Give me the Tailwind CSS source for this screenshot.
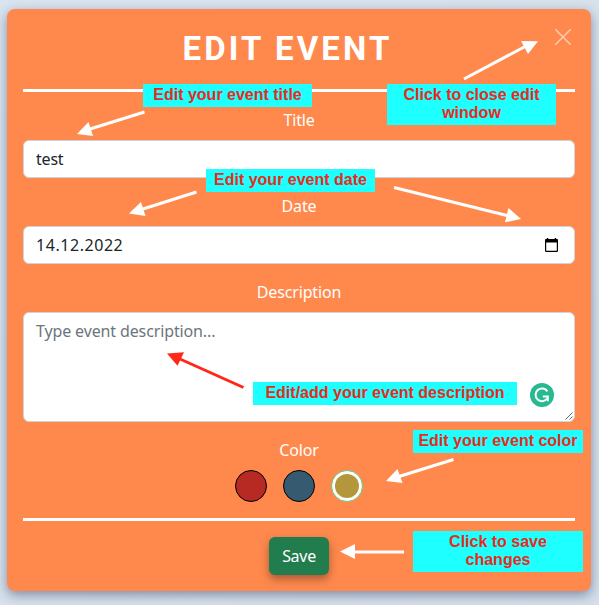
<!DOCTYPE html>
<html lang="en">
<head>
<meta charset="utf-8">
<title>Edit event</title>
<script src="https://cdn.jsdelivr.net/npm/@tailwindcss/browser@4"></script>
</head>
<body class="relative h-[605px] w-[599px] overflow-hidden bg-linear-to-br from-[#dae4ef] to-[#d3dfea] pt-[9px] pl-[7px] font-['Noto_Sans',sans-serif] text-base">
<main class="flex h-[582px] w-[584px] flex-col rounded-lg bg-[#ff894d] px-4 text-white shadow-[0_4px_12px_rgba(30,35,70,0.45)]">
  <header class="relative flex h-[83px] shrink-0 items-center justify-center border-b-3 border-white">
    <h1 class="pr-[23px] font-['Roboto',sans-serif] text-[33px] leading-10 font-bold tracking-[3.1px]">EDIT EVENT</h1>
    <button class="absolute top-5 right-1 h-4 w-4" aria-label="Close">
      <svg viewBox="0 0 16 16" class="h-4 w-4" fill="none" stroke="white" stroke-opacity=".55" stroke-width="1.6" stroke-linecap="round"><path d="M.8.8 15.2 15.2M15.2.8.8 15.2"/></svg>
    </button>
  </header>
  <label class="mt-4 mb-2 h-6 text-center leading-6 tracking-[-0.2px]">Title</label>
  <div class="flex h-[38px] shrink-0 items-center rounded-md border border-[#ced4da] bg-white px-3 tracking-[-0.2px] text-[#212529]">test</div>
  <label class="mt-4 mb-2 h-6 text-center leading-6 tracking-[-0.1px]">Date</label>
  <div class="flex h-[38px] shrink-0 items-center justify-between rounded-md border border-[#ced4da] bg-white px-3 text-[#212529]">
    <span class="tracking-[0.55px]">14.12.2022</span>
    <svg viewBox="0 0 13 14" class="mr-1 h-[14px] w-[13px]"><path fill="black" fill-rule="evenodd" d="M1.800 0h1.500v1h6.400V0h1.500v1H12a1 1 0 0 1 1 1v10.800a1.200 1.200 0 0 1-1.200 1.200H1.200A1.200 1.200 0 0 1 0 12.800V2a1 1 0 0 1 1-1h.8zM1.200 4.500v8.200h10.600V4.500z"/></svg>
  </div>
  <label class="mt-4 mb-2 h-6 text-center leading-6 tracking-[-0.15px]">Description</label>
  <div class="relative h-[110px] shrink-0 rounded-md border border-[#ced4da] bg-white px-3 py-1.5 leading-6 tracking-[-0.13px] text-[#6c757d]">Type event description...
    <svg viewBox="0 0 24 24" class="absolute top-[70px] right-5 h-6 w-6"><circle cx="12" cy="12" r="12" fill="#27b990"/><path d="M17.400 8.400A6.400 6.400 0 1 0 17.200 15.500" fill="none" stroke="white" stroke-width="2"/><path d="M12.800 13.500h5v4.800" fill="none" stroke="white" stroke-width="2"/></svg>
    <svg viewBox="0 0 8 8" class="absolute right-px bottom-px h-2 w-2" fill="none" stroke="#555" stroke-width=".9"><path d="M.5 7.500 7.500.5M4.500 7.500l3-3"/></svg>
  </div>
  <label class="mt-4 mb-2 h-6 text-center leading-6 tracking-[-0.1px]">Color</label>
  <div class="flex h-8 shrink-0 justify-center gap-4">
    <span class="h-8 w-8 rounded-full border border-black bg-[#b72a24]"></span>
    <span class="h-8 w-8 rounded-full border border-black bg-[#365b70]"></span>
    <span class="flex h-8 w-8 items-center justify-center rounded-full border border-[#67c777] bg-white"><i class="h-6 w-6 rounded-full bg-[#b5973b]"></i></span>
  </div>
  <footer class="mt-4 flex justify-center border-t-3 border-white pt-4">
    <button class="h-[38px] w-[60px] rounded-md bg-[#217c4e] tracking-[-0.3px] shadow-[0_4px_8px_rgba(60,30,20,0.45)]">Save</button>
  </footer>
</main>

<svg class="absolute inset-0" width="599" height="605" fill="white" stroke="white" stroke-width="3">
  <path d="M144.500 112 90 129"/><path stroke="none" d="M77 134l11.500-12 4.500 14z"/>
  <path d="M464 79 526 46"/><path stroke="none" d="M538 41.300l-17-.3 7 13z"/>
  <path d="M196.500 192 143 209"/><path stroke="none" d="M129 213.500 141 202l4.500 14z"/>
  <path d="M394 187.500 507 215.500"/><path stroke="none" d="M521 219l-12.500-11-3.500 14.300z"/>
  <path d="M453.500 459.500 399 476.500"/><path stroke="none" d="M386 481l11.500-12 5 14z"/>
  <path d="M404 552H354"/><path stroke="none" d="M340 551.500l15-7.500v15z"/>
  <g fill="#ff2818" stroke="#ff2818"><path d="M243.500 387.500 180 359"/><path stroke="none" d="M167 353.500l17-1.300-6.500 13.600z"/></g>
</svg>

<section class="font-['Liberation_Sans',sans-serif] text-base leading-[18px] font-bold text-[#e72b20]">
  <div class="absolute top-[84px] left-[143px] h-[23px] w-[169px] bg-[#1effff] pt-[2px] text-center whitespace-nowrap">Edit your event title</div>
  <div class="absolute top-[84px] left-[387px] h-[41px] w-[169px] bg-[#1effff] pt-[2px] text-center">Click to close edit window</div>
  <div class="absolute top-[169px] left-[206px] h-[23px] w-[169px] bg-[#1effff] pt-[2px] text-center whitespace-nowrap">Edit your event date</div>
  <div class="absolute top-[382px] left-[253px] h-[23px] w-[264px] bg-[#1effff] pt-[2px] text-center whitespace-nowrap">Edit/add your event description</div>
  <div class="absolute top-[430px] left-[413px] h-[23px] w-[170px] bg-[#1effff] pt-[2px] text-center whitespace-nowrap">Edit your event color</div>
  <div class="absolute top-[531px] left-[413px] h-[41px] w-[170px] bg-[#1effff] pt-[2px] text-center">Click to save<br>changes</div>
</section>
</body>
</html>
